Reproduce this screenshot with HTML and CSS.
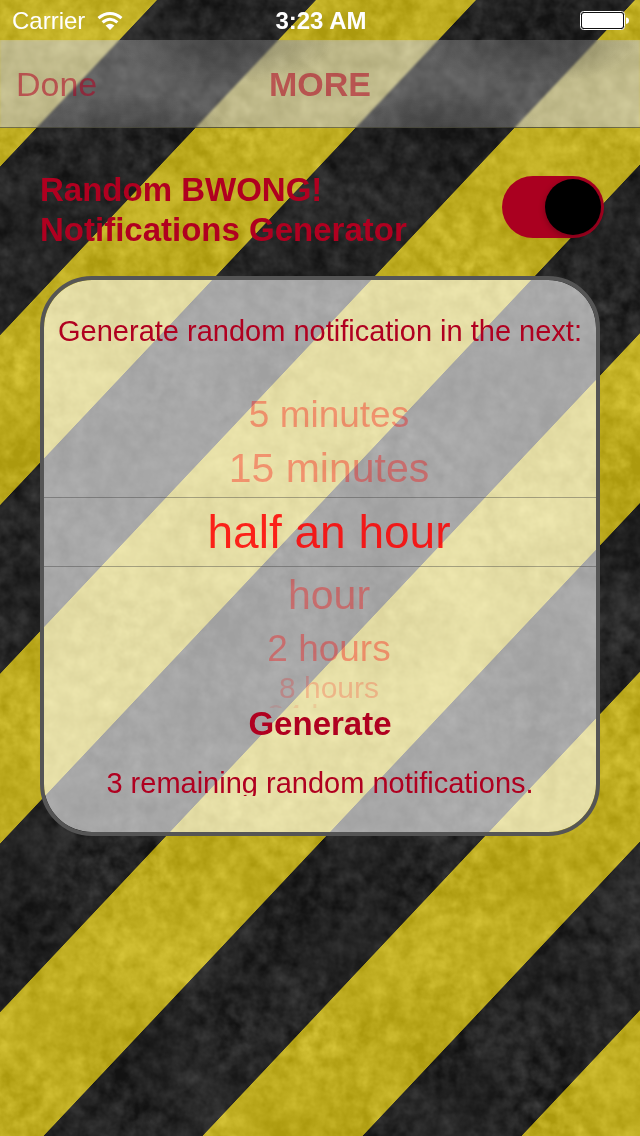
FILE: index.html
```html
<!DOCTYPE html>
<html lang="en">
<head>
<meta charset="utf-8">
<meta name="viewport" content="width=device-width, initial-scale=1">
<title>More</title>
<link rel="stylesheet" href="styles.css">
</head>
<body>
<svg class="backdrop" aria-hidden="true">
  <defs>
    <pattern id="stripes" width="319" height="40" patternUnits="userSpaceOnUse" patternTransform="translate(157 0) skewX(-43.3)">
      <rect width="319" height="40" fill="#ac9a0e"/>
      <rect width="159" height="40" fill="#121212"/>
    </pattern>
    <filter id="grunge" x="0" y="0" width="100%" height="100%" color-interpolation-filters="sRGB">
      <feTurbulence type="fractalNoise" baseFrequency="0.012" numOctaves="2" seed="8" result="clouds"/>
      <feTurbulence type="fractalNoise" baseFrequency="0.07" numOctaves="3" seed="3" result="grain"/>
      <feComposite in="clouds" in2="grain" operator="arithmetic" k1="0" k2="0.45" k3="0.55" k4="0" result="noise"/>
      <feColorMatrix in="noise" type="matrix" values="0.32 0 0 0 -0.09  0.32 0 0 0 -0.09  0.32 0 0 0 -0.09  0 0 0 0 1" result="gray"/>
      <feComposite in="SourceGraphic" in2="gray" operator="arithmetic" k1="0" k2="1" k3="1" k4="0"/>
    </filter>
  </defs>
  <rect width="100%" height="100%" fill="url(#stripes)" filter="url(#grunge)"/>
</svg>

<div class="screen">
  <div class="status">
    <div class="carrier">
      <span>Carrier</span>
      <svg width="26" height="18" viewBox="0 0 26 18" aria-hidden="true">
        <g fill="none" stroke="#fff" stroke-width="3">
          <path d="M1.5 6.2Q7 1.5 13 1.5T24.5 6.2"/>
          <path d="M5.6 10.4Q9.200 7.200 13 7.200T20.400 10.400"/>
        </g>
        <path d="M8.600 13.400Q13 9.900 17.400 13.400L13 18Z" fill="#fff"/>
      </svg>
    </div>
    <time>3:23 AM</time>
    <svg class="battery" width="50" height="20" viewBox="0 0 50 20" role="img" aria-label="Battery full">
      <rect x="0.500" y="0.500" width="44" height="18" rx="3" fill="#111" stroke="#fff"/>
      <rect x="2" y="2" width="41" height="15" rx="2" fill="#fff"/>
      <path d="M46 6.500Q49 6.500 49 9.500T46 13Z" fill="#fff"/>
    </svg>
  </div>

  <header class="nav">
    <button class="done" type="button">Done</button>
    <h1>MORE</h1>
  </header>

  <main>
    <div class="setting">
      <label for="generator">Random BWONG!<br>Notifications Generator</label>
      <input id="generator" class="switch" type="checkbox" role="switch" checked>
    </div>

    <section class="panel">
      <h2 id="prompt">Generate random notification in the next:</h2>
      <div class="wheel" role="radiogroup" aria-labelledby="prompt">
        <label class="far"><input type="radio" name="delay">5 minutes</label>
        <label class="near"><input type="radio" name="delay">15 minutes</label>
        <label class="picked"><input type="radio" name="delay" checked>half an hour</label>
        <label class="near"><input type="radio" name="delay">hour</label>
        <label class="far"><input type="radio" name="delay">2 hours</label>
        <label class="edge"><input type="radio" name="delay">8 hours</label>
        <label class="sliver"><input type="radio" name="delay">24 hours</label>
      </div>
      <button class="generate" type="button">Generate</button>
      <p class="remaining">3 remaining random notifications.</p>
    </section>
  </main>
</div>
</body>
</html>
```
FILE: styles.css
```css
* {
  box-sizing: border-box;
}

body {
  margin: 0;
  background: #222;
  color: #b00020;
  font-family: "Liberation Sans", Arial, sans-serif;
}

h1, h2, p {
  margin: 0;
}

button {
  padding: 0;
  border: 0;
  background: none;
  color: inherit;
  font-family: inherit;
}

.backdrop {
  position: fixed;
  inset: 0;
  z-index: -1;
  width: 100%;
  height: 100%;
}

.screen {
  min-height: 100vh;
}

.status {
  display: grid;
  grid-template-columns: 1fr auto 1fr;
  align-items: center;
  height: 40px;
  padding: 2px 10px 0 12px;
  color: #fff;
  font-size: 24px;
}

.carrier {
  display: flex;
  align-items: center;
  gap: 12px;
}

.status time {
  font-weight: bold;
}

.battery {
  justify-self: end;
}

.nav {
  display: grid;
  grid-template-columns: 1fr auto 1fr;
  align-items: center;
  height: 88px;
  padding: 2px 16px 0;
  border-bottom: 1px solid rgba(60, 60, 40, 0.6);
  background:
    radial-gradient(110px 40px at 225px 4px, rgba(20, 20, 20, 0.35), transparent),
    radial-gradient(100px 34px at 130px 88px, rgba(20, 20, 20, 0.3), transparent),
    radial-gradient(110px 40px at 530px 4px, rgba(20, 20, 20, 0.35), transparent),
    radial-gradient(100px 34px at 445px 88px, rgba(20, 20, 20, 0.3), transparent),
    rgba(220, 220, 220, 0.32);
  -webkit-backdrop-filter: saturate(0.5) blur(1px);
  backdrop-filter: saturate(0.5) blur(1px);
}

.nav h1 {
  color: rgba(176, 0, 32, 0.55);
  font-size: 34px;
}

.done {
  justify-self: start;
  color: rgba(176, 0, 32, 0.55);
  font-size: 34px;
}

main {
  padding: 42px 40px;
}

.setting {
  display: flex;
  align-items: center;
  justify-content: space-between;
  margin-right: -4px;
  font-size: 33px;
  font-weight: bold;
  line-height: 40px;
}

.switch {
  appearance: none;
  width: 102px;
  height: 62px;
  margin: 0 0 6px;
  padding: 3px;
  border-radius: 31px;
  background: #aa0020;
}

.switch::before {
  content: "";
  display: block;
  width: 56px;
  height: 56px;
  border-radius: 50%;
  background: #000;
  box-shadow: 0 2px 6px rgba(0, 0, 0, 0.3);
}

.switch:checked::before {
  margin-left: auto;
}

.panel {
  display: flex;
  flex-direction: column;
  align-items: center;
  margin-top: 26px;
  padding: 36px 0;
  border: 4px solid #555;
  border-radius: 52px;
  background: rgba(255, 255, 255, 0.6);
  background-clip: padding-box;
}

.panel h2,
.remaining {
  font-size: 29px;
  font-weight: normal;
  line-height: 30px;
  white-space: nowrap;
}

.wheel {
  align-self: stretch;
  display: flex;
  flex-direction: column;
  margin-top: 44px;
  color: rgba(255, 0, 0, 0.35);
  text-align: center;
}

.wheel label {
  padding-left: 18px;
}

.wheel input {
  appearance: none;
  width: 0;
  height: 0;
  margin: 0;
}

.wheel .far {
  font-size: 37px;
  line-height: 50px;
}

.wheel .near {
  font-size: 41px;
  line-height: 57px;
}

.wheel .picked {
  border: solid rgba(60, 60, 60, 0.4);
  border-width: 1px 0;
  color: rgba(255, 0, 0, 0.85);
  font-size: 46px;
  line-height: 68px;
}

.wheel .edge {
  color: rgba(255, 0, 0, 0.2);
  font-size: 30px;
  line-height: 28px;
}

.wheel .sliver {
  height: 6px;
  overflow: hidden;
  color: rgba(255, 0, 0, 0.1);
  font-size: 32px;
  line-height: 28px;
}

.generate {
  font-size: 33px;
  font-weight: bold;
  line-height: 32px;
}

.remaining {
  height: 28px;
  margin-top: 28px;
  overflow: hidden;
}
```
